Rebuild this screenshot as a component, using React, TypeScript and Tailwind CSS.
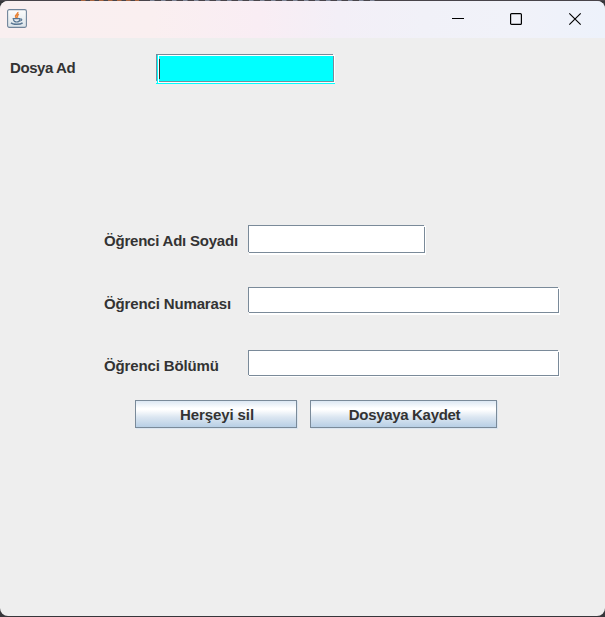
import type { ReactNode } from "react";

function Label({ children, className = "" }: { children: ReactNode; className?: string }) {
  return <span className={`whitespace-nowrap text-[15px] leading-[18px] ${className}`}>{children}</span>;
}

/* Text field with an etched one-pixel frame and a light lower edge */
function Field({ className = "" }: { className?: string }) {
  return (
    <div className={`relative overflow-hidden bg-white ${className}`}>
      <i className="absolute left-0 top-0 right-[2px] h-px bg-[#7a8a99]" />
      <i className="absolute left-0 top-0 bottom-[3px] w-px bg-[#7a8a99]" />
      <i className="absolute left-px right-px bottom-[2px] h-px bg-[#7a8a99]" />
      <i className="absolute right-px top-[2px] bottom-[2px] w-px bg-[#7a8a99]" />
      <i className="absolute right-0 top-0 h-px w-[2px] bg-[#eeeeee]" />
      <i className="absolute left-0 bottom-0 h-[3px] w-px bg-[#eeeeee]" />
    </div>
  );
}

function FileField() {
  return (
    <div className="relative h-[30px] w-[179px] bg-[#00ffff]">
      <i className="absolute left-0 top-0 h-px w-[177px] bg-[#7a8a99]" />
      <i className="absolute right-0 top-0 h-px w-[2px] bg-[#eeeeee]" />
      <i className="absolute left-0 top-0 h-[27px] w-px bg-[#7a8a99]" />
      <i className="absolute left-0 top-[27px] h-[2px] w-px bg-[#eeeeee]" />
      <i className="absolute left-[2px] right-0 top-px h-px bg-white" />
      <i className="absolute left-[2px] top-px h-[27px] w-px bg-white" />
      <i className="absolute right-0 top-px h-[28px] w-px bg-white" />
      <i className="absolute right-px top-[2px] h-[26px] w-px bg-[#7a8a99]" />
      <i className="absolute left-[3px] right-px top-[27px] h-px bg-[#7a8a99]" />
      <i className="absolute left-[2px] right-0 top-[28px] h-px bg-white" />
      <i className="absolute left-[3px] top-[5px] h-[20px] w-px bg-[#333333]" />
    </div>
  );
}

function MetalButton({ children, className = "" }: { children: ReactNode; className?: string }) {
  return (
    <button
      className={`h-[28px] border border-[#7a8a99] bg-[linear-gradient(180deg,#dde8f3_0%,#ffffff_28%,#ffffff_34%,#dbe6f1_62%,#b8cfe5_100%)] pt-[2px] text-center text-[15px] leading-[24px] font-bold text-[#333333] shadow-[1px_1px_0_#dce6f0] ${className}`}
    >
      {children}
    </button>
  );
}

function JavaIcon() {
  return (
    <svg width="20" height="19" viewBox="0 0 20 19" fill="none">
      <defs>
        <linearGradient id="tile" x1="0" y1="0" x2="0" y2="1">
          <stop stopColor="#fdfdfc" />
          <stop offset="1" stopColor="#dbe3e9" />
        </linearGradient>
      </defs>
      <rect x=".6" y=".6" width="18.8" height="17.8" rx="1.6" fill="url(#tile)" stroke="#70849a" strokeWidth="1.1" />
      <path d="M10.8 3c1 2-3.2 2.8-2.2 5L10 9.3M12 5.4c-2 1-2 1.8-1.2 3.2" stroke="#e88438" strokeWidth="1.5" />
      <path d="M5.6 9.6h7.6M6.4 10.4c.2 2.1 1 2.6 3.3 2.6 2 0 3-.6 3.2-2.6M13 10h1.4c1 1-.1 2-2 2.1" stroke="#587693" strokeWidth="1.1" />
      <path d="M4 13.8c1.7 2 9.2 2 11.6.1" stroke="#587693" strokeWidth="1.4" />
    </svg>
  );
}

function TitleBar() {
  return (
    <header className="flex h-[37px] items-center bg-[linear-gradient(90deg,#f9eff0_0%,#faeff0_25%,#f9edf4_43%,#f3eff7_56%,#f1f1f8_70%,#f1f2f9_85%,#edf2fb_100%)]">
      <div className="mb-[2px] ml-[7px]"><JavaIcon /></div>
      <div className="mb-px ml-auto flex h-full items-center text-black">
        <svg width="14" height="14" viewBox="0 0 14 14"><path d="M1 6.5h12" stroke="currentColor" /></svg>
        <svg className="ml-[44px]" width="14" height="14" viewBox="0 0 14 14"><rect x="1.6" y="1.6" width="10.8" height="10.8" rx="1" fill="none" stroke="currentColor" strokeWidth="1.2" /></svg>
        <svg className="mr-[23px] ml-[45px]" width="14" height="14" viewBox="0 0 14 14"><path d="m1.3 1.3 11.4 11.4M12.7 1.3 1.3 12.7" stroke="currentColor" strokeWidth="1.15" /></svg>
      </div>
    </header>
  );
}

/* Clipped line of the editor that lies behind the window's top edge */
function BackdropLine() {
  return (
    <div className="flex h-px bg-[#48444a] pl-[81px]">
      <i className="h-px w-[58px] bg-[repeating-linear-gradient(90deg,#a9653f_0px,#a9653f_4px,#48444a_5px,#48444a_9px)]" />
      <i className="ml-[11px] h-px w-[225px] bg-[repeating-linear-gradient(90deg,#7d8496_0px,#7d8496_4px,#48444a_5px,#48444a_11px)]" />
    </div>
  );
}

export default function App() {
  return (
    <div className="h-[617px] w-[605px] overflow-hidden bg-[#36363a]">
      <BackdropLine />
      <div className="h-[615px] overflow-hidden rounded-[8px] bg-[#eeeeee] font-['Liberation_Sans',Arial,sans-serif] font-bold text-[#333333]">
        <TitleBar />
        <main>
          <div className="flex pt-[16px] pl-[10px]">
            <Label className="mt-[5px] w-[146px] tracking-[-0.42px]">Dosya Ad</Label>
            <FileField />
          </div>
          <div className="mt-[141px] flex pl-[104px]">
            <Label className="mt-[7px] w-[144px] tracking-[-0.22px]">Öğrenci Adı Soyadı</Label>
            <Field className="h-[30px] w-[178px]" />
          </div>
          <div className="mt-[32px] flex pl-[104px]">
            <Label className="mt-[8px] w-[144px] tracking-[-0.14px]">Öğrenci Numarası</Label>
            <Field className="h-[28px] w-[312px]" />
          </div>
          <div className="mt-[35px] flex pl-[104px]">
            <Label className="mt-[7px] w-[144px] tracking-[-0.14px]">Öğrenci Bölümü</Label>
            <Field className="h-[28px] w-[312px] [clip-path:inset(0_0_1px_0)]" />
          </div>
          <div className="mt-[22px] flex gap-[13px] pl-[135px]">
            <MetalButton className="w-[162px] pl-[2px] tracking-[-0.1px]">Herşeyi sil</MetalButton>
            <MetalButton className="w-[187px] pl-[2px] tracking-[-0.32px]">Dosyaya Kaydet</MetalButton>
          </div>
        </main>
      </div>
    </div>
  );
}
